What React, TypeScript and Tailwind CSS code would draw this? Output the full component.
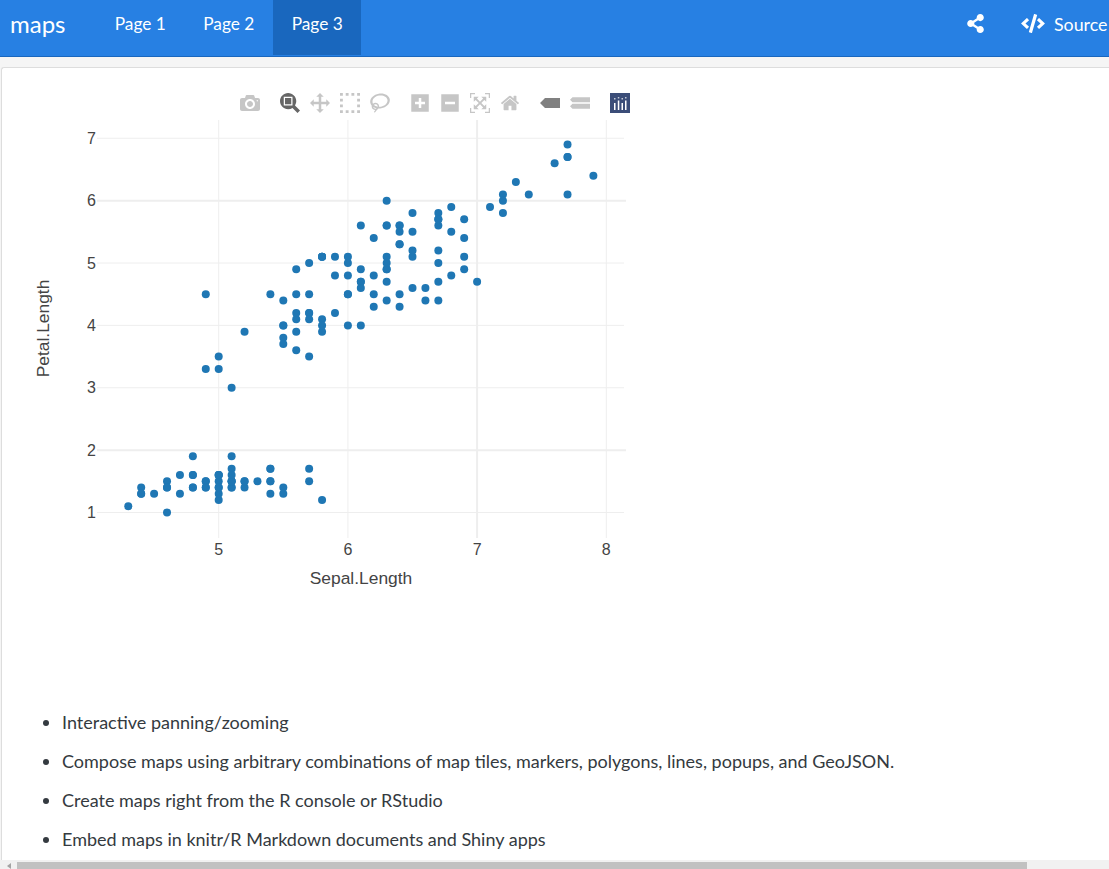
import React from 'react';
import { FaCode, FaShareAlt } from 'react-icons/fa';

// iris: [Sepal.Length, Petal.Length]
const iris: [number, number][] = [
  [5.1, 1.4], [4.9, 1.4], [4.7, 1.3], [4.6, 1.5], [5.0, 1.4], [5.4, 1.7], [4.6, 1.4], [5.0, 1.5], [4.4, 1.4], [4.9, 1.5],
  [5.4, 1.5], [4.8, 1.6], [4.8, 1.4], [4.3, 1.1], [5.8, 1.2], [5.7, 1.5], [5.4, 1.3], [5.1, 1.4], [5.7, 1.7], [5.1, 1.5],
  [5.4, 1.7], [5.1, 1.5], [4.6, 1.0], [5.1, 1.7], [4.8, 1.9], [5.0, 1.6], [5.0, 1.6], [5.2, 1.5], [5.2, 1.4], [4.7, 1.6],
  [4.8, 1.6], [5.4, 1.5], [5.2, 1.5], [5.5, 1.4], [4.9, 1.5], [5.0, 1.2], [5.5, 1.3], [4.9, 1.4], [4.4, 1.3], [5.1, 1.5],
  [5.0, 1.3], [4.5, 1.3], [4.4, 1.3], [5.0, 1.6], [5.1, 1.9], [4.8, 1.4], [5.1, 1.6], [4.6, 1.4], [5.3, 1.5], [5.0, 1.4],
  [7.0, 4.7], [6.4, 4.5], [6.9, 4.9], [5.5, 4.0], [6.5, 4.6], [5.7, 4.5], [6.3, 4.7], [4.9, 3.3], [6.6, 4.6], [5.2, 3.9],
  [5.0, 3.5], [5.9, 4.2], [6.0, 4.0], [6.1, 4.7], [5.6, 3.6], [6.7, 4.4], [5.6, 4.5], [5.8, 4.1], [6.2, 4.5], [5.6, 3.9],
  [5.9, 4.8], [6.1, 4.0], [6.3, 4.9], [6.1, 4.7], [6.4, 4.3], [6.6, 4.4], [6.8, 4.8], [6.7, 5.0], [6.0, 4.5], [5.7, 3.5],
  [5.5, 3.8], [5.5, 3.7], [5.8, 3.9], [6.0, 5.1], [5.4, 4.5], [6.0, 4.5], [6.7, 4.7], [6.3, 4.4], [5.6, 4.1], [5.5, 4.0],
  [5.5, 4.4], [6.1, 4.6], [5.8, 4.0], [5.0, 3.3], [5.6, 4.2], [5.7, 4.2], [5.7, 4.2], [6.2, 4.3], [5.1, 3.0], [5.7, 4.1],
  [6.3, 6.0], [5.8, 5.1], [7.1, 5.9], [6.3, 5.6], [6.5, 5.8], [7.6, 6.6], [4.9, 4.5], [7.3, 6.3], [6.7, 5.8], [7.2, 6.1],
  [6.5, 5.1], [6.4, 5.3], [6.8, 5.5], [5.7, 5.0], [5.8, 5.1], [6.4, 5.3], [6.5, 5.5], [7.7, 6.7], [7.7, 6.9], [6.0, 5.0],
  [6.9, 5.7], [5.6, 4.9], [7.7, 6.7], [6.3, 4.9], [6.7, 5.7], [7.2, 6.0], [6.2, 4.8], [6.1, 4.9], [6.4, 5.6], [7.2, 5.8],
  [7.4, 6.1], [7.9, 6.4], [6.4, 5.6], [6.3, 5.1], [6.1, 5.6], [7.7, 6.1], [6.3, 5.6], [6.4, 5.5], [6.0, 4.8], [6.9, 5.4],
  [6.7, 5.6], [6.9, 5.1], [5.8, 5.1], [6.8, 5.9], [6.7, 5.7], [6.7, 5.2], [6.3, 5.0], [6.5, 5.2], [6.2, 5.4], [5.9, 5.1],
];

// svg sits at page x=0, y=120
const px = (v: number) => 218.7 + (v - 5) * 129.2;
const py = (v: number) => 392.5 - (v - 1) * 62.37;

const flip = 'matrix(1 0 0 -1 0 850)';

type Icon = { w?: number; d: string; fill: string; gap?: boolean };

const tools: Icon[] = [
  { fill: 'fill-[#c6c6c6]', d: 'm500 450c-83 0-150-67-150-150 0-83 67-150 150-150 83 0 150 67 150 150 0 83-67 150-150 150z m400 150h-120c-16 0-34 13-39 29l-31 93c-6 15-23 28-40 28h-340c-16 0-34-13-39-28l-31-93c-6-16-23-29-40-29h-120c-55 0-100-45-100-100v-450c0-55 45-100 100-100h800c55 0 100 45 100 100v450c0 55-45 100-100 100z m-400-550c-138 0-250 112-250 250 0 138 112 250 250 250 138 0 250-112 250-250 0-138-112-250-250-250z m365 380c-19 0-35 16-35 35 0 19 16 35 35 35 19 0 35-16 35-35 0-19-16-35-35-35z' },
  { gap: true, fill: 'fill-[#666666]', d: 'm1000-25l-250 251c40 63 63 138 63 218 0 224-182 406-407 406-224 0-406-182-406-406s183-406 407-406c80 0 155 22 218 62l250-250 125 125z m-812 250l0 438 437 0 0-438-437 0z m62 375l313 0 0-312-313 0 0 312z' },
  { fill: 'fill-[#c6c6c6]', d: 'm1000 350l-187 188 0-125-250 0 0 250 125 0-188 187-187-187 125 0 0-250-250 0 0 125-188-188 186-187 0 125 252 0 0-250-125 0 187-188 188 188-125 0 0 250 250 0 0-126 187 188z' },
  { fill: 'fill-[#c6c6c6]', d: 'm0 850l0-143 143 0 0 143-143 0z m286 0l0-143 143 0 0 143-143 0z m285 0l0-143 143 0 0 143-143 0z m286 0l0-143 143 0 0 143-143 0z m-857-286l0-143 143 0 0 143-143 0z m857 0l0-143 143 0 0 143-143 0z m-857-285l0-143 143 0 0 143-143 0z m857 0l0-143 143 0 0 143-143 0z m-857-286l0-143 143 0 0 143-143 0z m286 0l0-143 143 0 0 143-143 0z m285 0l0-143 143 0 0 143-143 0z m286 0l0-143 143 0 0 143-143 0z' },
  { w: 1031, fill: 'fill-[#c6c6c6]', d: 'm1018 538c-36 207-290 336-568 286-277-48-473-256-436-463 10-57 36-108 76-151-13-66 11-137 68-183 34-28 75-41 114-42l-55-70 0 0c-2-1-3-2-4-3-10-14-8-34 5-45 14-11 34-8 45 4 1 1 2 3 2 5l0 0 113 140c16 11 31 24 45 40 4 3 6 7 8 11 48-3 100 0 151 9 278 48 473 255 436 462z m-624-379c-80 14-149 48-197 96 42 42 109 47 156 9 33-26 47-66 41-105z m-187-74c-19 16-33 37-39 60 50-32 109-55 174-68-42-25-95-24-135 8z m360 75c-34-7-69-9-102-8 8 62-16 128-68 170-73 59-175 54-244-5-9 20-16 40-20 61-28 159 121 317 333 354s407-60 434-217c28-159-121-318-333-355z' },
  { gap: true, w: 875, fill: 'fill-[#c6c6c6]', d: 'm1 787l0-875 875 0 0 875-875 0z m687-500l-187 0 0-187-125 0 0 187-188 0 0 125 188 0 0 187 125 0 0-187 187 0 0-125z' },
  { w: 875, fill: 'fill-[#c6c6c6]', d: 'm0 788l0-876 875 0 0 876-875 0z m688-500l-500 0 0 125 500 0 0-125z' },
  { fill: 'fill-[#c6c6c6]', d: 'm250 850l-187 0-63 0 0-62 0-188 63 0 0 188 187 0 0 62z m688 0l-188 0 0-62 188 0 0-188 62 0 0 188 0 62-62 0z m-875-938l0 188-63 0 0-188 0-62 63 0 187 0 0 62-187 0z m875 188l0-188-188 0 0-62 188 0 62 0 0 62 0 188-62 0z m-125 188l-1 0-93-94-156 156 156 156 92-93 2 0 0 250-250 0 0-2 93-92-156-156-156 156 94 92 0 2-250 0 0-250 0 0 93 93 157-156-157-156-93 94 0 0 0-250 250 0 0 0-94 93 156 157 156-157-93-93 0 0 250 0 0 250z' },
  { w: 928.6, fill: 'fill-[#c6c6c6]', d: 'm786 296v-267q0-15-11-26t-25-10h-214v214h-143v-214h-214q-15 0-25 10t-11 26v267q0 1 0 2t0 2l321 264 321-264q1-1 1-4z m124 39l-34-41q-5-5-12-6h-2q-7 0-12 3l-386 322-386-322q-7-4-13-4-7 2-12 7l-35 41q-4 5-3 13t6 12l401 334q18 15 42 15t43-15l136-114v109q0 8 5 13t13 5h107q8 0 13-5t5-13v-227l122-102q5-5 6-12t-4-13z' },
  { gap: true, w: 1500, fill: 'fill-[#808080]', d: 'm375 725l0 0-375-375 375-374 0-1 1125 0 0 750-1125 0z' },
  { w: 1500, fill: 'fill-[#c6c6c6]', d: 'm187 786l0 2-187-188 188-187 0 0 1312 0 0 373-1313 0z m0-499l0 1-187-188 188-188 0 0 1312 0 0 376-1313-1z' },
];

const logoCols = [
  { x: 4, top: 10, dot: 5 },
  { x: 7.8, top: 7.5, dot: 4 },
  { x: 11.5, top: 10, dot: 5 },
  { x: 15, top: 7.5, dot: 4 },
];

const bullets = [
  'Interactive panning/zooming',
  'Compose maps using arbitrary combinations of map tiles, markers, polygons, lines, popups, and GeoJSON.',
  'Create maps right from the R console or RStudio',
  'Embed maps in knitr/R Markdown documents and Shiny apps',
];

const Toolbar = () => (
  <div className="flex items-center pl-[238px] h-[20px] mt-[25px]">
    {tools.map((t, i) => {
      const w = t.w ?? 1000;
      return (
        <svg
          key={i}
          viewBox={`0 0 ${w} 1000`}
          className={`w-[20px] h-[20px] shrink-0 ${t.gap && i > 0 ? 'ml-[20px]' : i > 0 ? 'ml-[10px]' : ''}`}
        >
          <path d={t.d} transform={flip} className={t.fill} />
        </svg>
      );
    })}
    <svg viewBox="0 0 20 20" className="w-[20px] h-[20px] ml-[20px] shrink-0">
      <rect width="20" height="20" fill="#3b4d78" />
      {logoCols.map((c, i) => (
        <g key={i} fill="#ffffff">
          <rect x={c.x} y={c.top} width="1.5" height={17 - c.top} />
          <rect x={c.x} y={c.dot} width="1.5" height="1.5" opacity="0.7" />
        </g>
      ))}
    </svg>
  </div>
);

const Chart = () => (
  <svg width="640" height="480" className="block -ml-[2px] mt-[7px]" style={{ fontFamily: '"Liberation Sans", Arial, sans-serif' }}>
    {[1, 2, 3, 4, 5, 6, 7].map((v) => (
      <g key={v}>
        <line x1="97" x2={v === 2 || v === 6 ? 626 : 624} y1={py(v)} y2={py(v)} stroke="#eeeeee" strokeWidth={v === 2 || v === 6 ? 2 : 1} />
        <text x="96" y={py(v) + 5.5} textAnchor="end" fontSize="16" fill="#444444">{v}</text>
      </g>
    ))}
    {[5, 6, 7, 8].map((v) => (
      <g key={v}>
        <line x1={px(v)} x2={px(v)} y1="0" y2="418" stroke="#eeeeee" strokeWidth={v === 7 ? 2 : 1} />
        <text x={px(v)} y="434.5" textAnchor="middle" fontSize="16" fill="#444444">{v}</text>
      </g>
    ))}
    {iris.map(([x, y], i) => (
      <circle key={i} cx={px(x)} cy={py(y)} r="4" fill="#1f77b4" />
    ))}
    <text x="361" y="464" textAnchor="middle" fontSize="17.4" fill="#444444">Sepal.Length</text>
    <text transform="translate(49 208.5) rotate(-90)" textAnchor="middle" fontSize="17.4" fill="#444444">Petal.Length</text>
  </svg>
);

export default function App() {
  return (
    <div className="h-screen w-full overflow-hidden flex flex-col bg-[#f5f5f5] font-['Lato','Liberation_Sans',sans-serif]">
      <nav className="h-[57px] shrink-0 flex bg-[#2780e3] border-b border-[#1967be] text-white text-[17.3px]">
        <span className="pl-[10px] pr-[30.5px] text-[24px] leading-[48px]">maps</span>
        <a className="px-[18.7px] leading-[48px]">Page 1</a>
        <a className="px-[18.7px] leading-[48px]">Page 2</a>
        <a className="px-[18.7px] leading-[48px] bg-[#1967be] h-[55px]">Page 3</a>
        <div className="ml-auto flex items-start whitespace-nowrap">
          <FaShareAlt className="w-[17px] h-[19px] mt-[14px] mr-[37px]" />
          <FaCode className="w-[24px] h-[19px] mt-[14px] mr-[9px]" />
          <span className="leading-[48px] w-[55px] text-[17.8px]">Source</span>
        </div>
      </nav>
      <main className="flex-1 min-h-0 mt-[10px] ml-px bg-white border-l border-t border-[#dddddd] rounded-tl-[3px] overflow-hidden text-[#343a40] text-[18px]">
        <Toolbar />
        <Chart />
        <ul className="list-disc pl-[60px] mt-[109px] flex flex-col gap-[13px] leading-[26px] whitespace-nowrap">
          {bullets.map((b) => (
            <li key={b}>{b}</li>
          ))}
        </ul>
      </main>
      <div className="h-[9px] shrink-0 flex bg-[#f1f1f1] pt-[2px]">
        <div className="w-[17px] flex items-center justify-center">
          <span className="w-0 h-0 border-y-[3px] border-y-transparent border-r-[4px] border-r-[#a3a3a3]" />
        </div>
        <div className="w-[1010px] bg-[#c1c1c1]" />
      </div>
    </div>
  );
}
